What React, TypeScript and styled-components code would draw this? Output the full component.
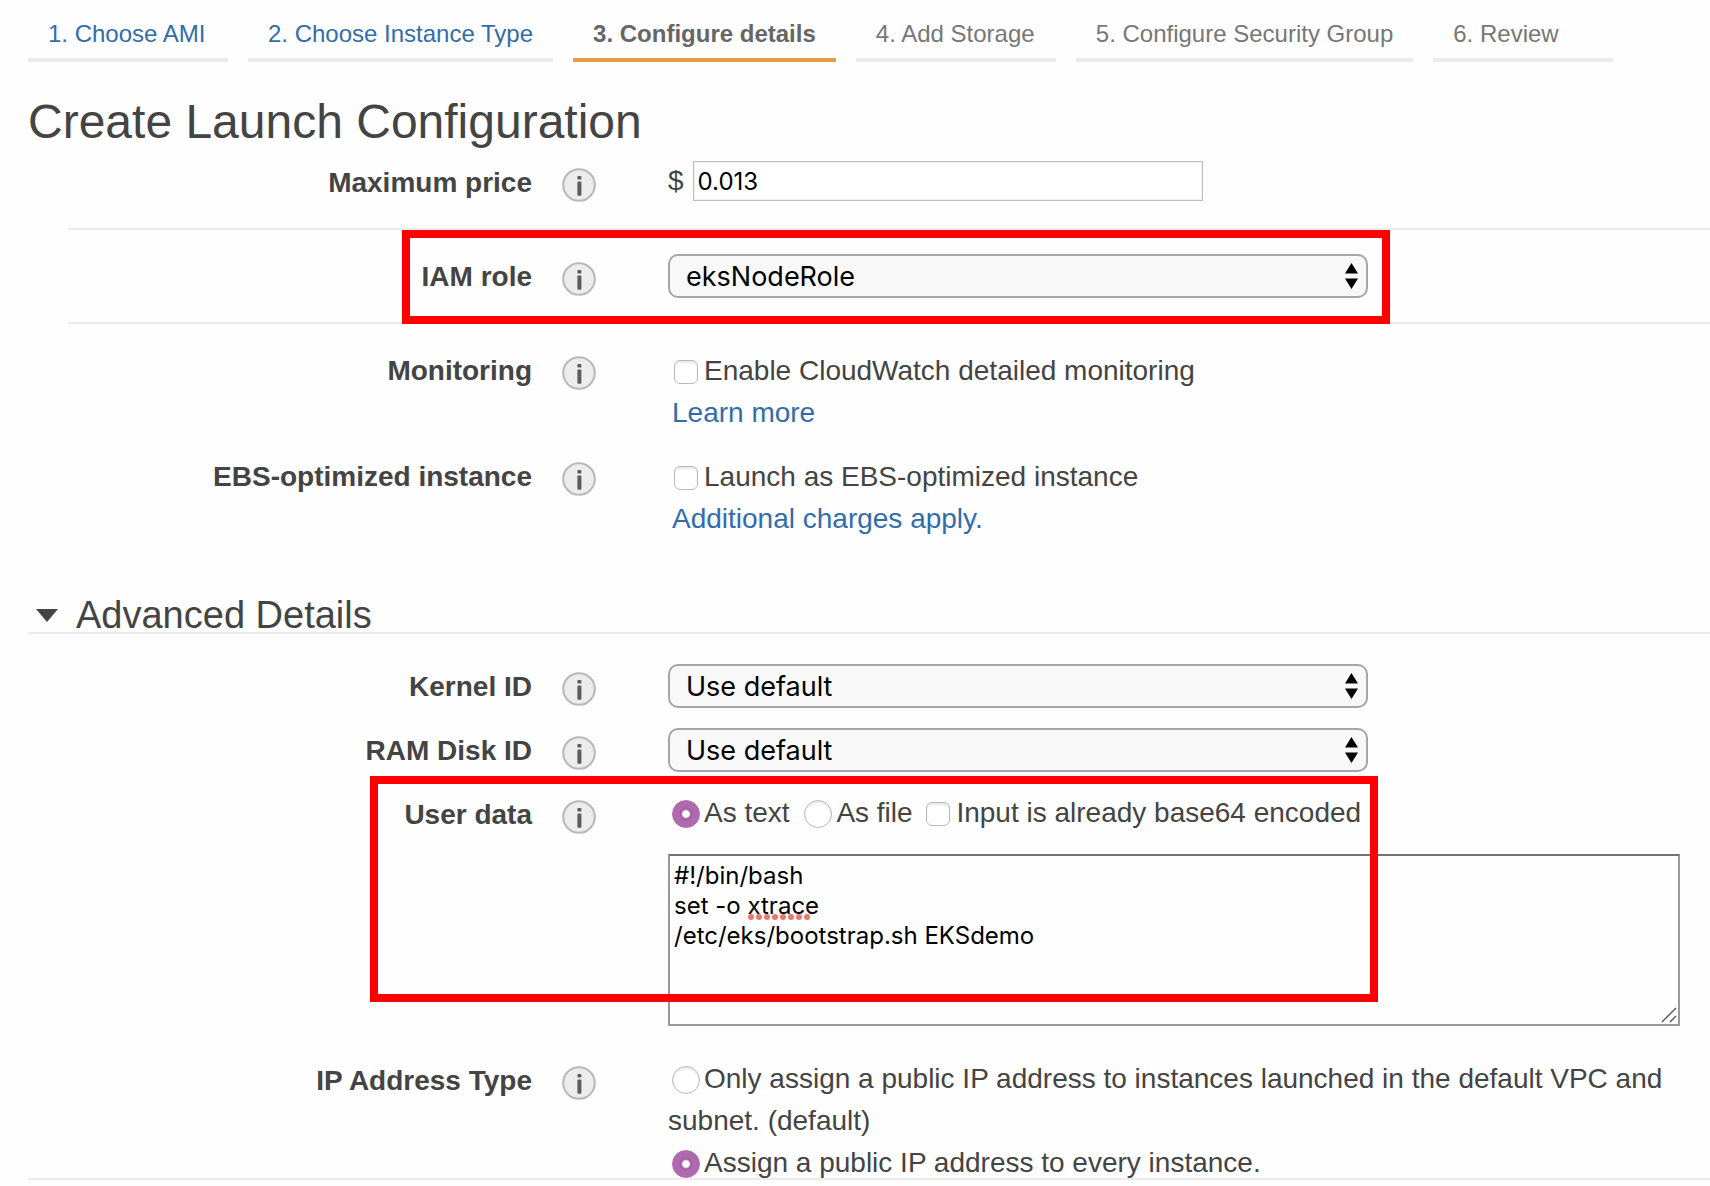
import React, { useState } from "react";
import styled, { createGlobalStyle, css } from "styled-components";

const sans = '"Liberation Sans", Arial, Helvetica, sans-serif';
const system = 'Inter, "Liberation Sans", sans-serif';

const GlobalStyle = createGlobalStyle`
  *, *::before, *::after { box-sizing: border-box; }
  body {
    margin: 0;
    background: #fefefe;
    color: #444;
    font-family: ${sans};
    font-size: 28px;
    line-height: 42px;
  }
`;

const Page = styled.main`
  display: flex;
  flex-direction: column;
  height: 100vh;
`;

const Steps = styled.nav`
  display: flex;
  gap: 20px;
  padding: 20px 0 0 28px;
`;

const Step = styled.a<{ $state: "done" | "current" | "todo" }>`
  min-width: 200px;
  padding: 0 20px 10px;
  border-bottom: 4px solid #ebebeb;
  color: #777;
  font-size: 24px;
  line-height: 28px;
  text-decoration: none;
  white-space: nowrap;
  &:last-child { min-width: 180px; }
  ${(p) => p.$state === "done" && css`color: #326dab;`}
  ${(p) =>
    p.$state === "current" &&
    css`
      color: #666;
      font-weight: bold;
      border-color: #e79c45;
    `}
`;

const Title = styled.h1`
  margin: 32px 0 0 28px;
  font-size: 48px;
  font-weight: normal;
  line-height: 56px;
`;

const Pane = styled.form`
  flex: 1;
  min-height: 0;
  padding-top: 10px;
  overflow-x: hidden;
  overflow-y: auto;
  scrollbar-width: none;
`;

const Footer = styled.footer`
  flex: none;
  height: 8px;
  margin-left: 28px;
  border-top: 2px solid #ebebeb;
`;

const Group = styled.div`
  display: flex;
  flex-direction: column;
  gap: 20px;
  margin-left: 68px;
`;

const MainGroup = styled(Group)`
  padding-top: 24px;
`;

const AdvancedGroup = styled(Group)`
  padding-top: 30px;
`;

const Row = styled.div`
  position: relative;
  display: grid;
  grid-template-columns: 464px 136px minmax(0, 1fr);
  align-items: start;
`;

const DividedRow = styled(Row)`
  margin-left: 68px;
  padding-bottom: 24px;
  border-bottom: 2px solid #ebebeb;
  & + & { padding-top: 24px; }
`;

const labelText = css`
  height: 44px;
  font-weight: bold;
  line-height: 46px;
  text-align: right;
`;

const FieldLabel = styled.label`
  ${labelText}
`;

const FieldName = styled.div`
  ${labelText}
`;

const InfoButton = styled.button`
  width: 34px;
  height: 34px;
  margin: 8px 0 0 30px;
  padding: 0;
  border: 0;
  background: none;
  svg { display: block; }
`;

const Content = styled.div<{ $inset?: boolean }>`
  padding: ${(p) => (p.$inset ? "2px" : "0")} 30px 0 0;
`;

const PriceField = styled.div`
  display: flex;
  align-items: center;
  gap: 9px;
`;

const PriceInput = styled.input`
  width: 510px;
  height: 40px;
  padding: 0 4px;
  border: 1px solid #bbb;
  border-radius: 0;
  background: #fff;
  box-shadow: inset 0 0 0 1px #f2f2f2;
  color: #000;
  font-family: ${system};
  font-size: 24px;
`;

const SelectWrap = styled.div`
  position: relative;
  width: 100%;
  max-width: 700px;
  svg {
    position: absolute;
    top: 9px;
    right: 10px;
    pointer-events: none;
  }
`;

const Select = styled.select`
  display: block;
  width: 100%;
  height: 44px;
  padding: 0 30px 0 16px;
  border: 2px solid #a6a6a6;
  border-radius: 10px;
  appearance: none;
  background: #f8f8f8;
  color: #000;
  font-family: ${system};
  font-size: 27px;
`;

const Line = styled.div``;

const controlShadow = css`
  appearance: none;
  border: 1px solid #b9b9b9;
  background: #fff;
  box-shadow: inset 0 2px 2px #e9e9e9;
`;

const Checkbox = styled.input`
  ${controlShadow}
  width: 24px;
  height: 24px;
  margin: 0 6px;
  border-radius: 6px;
  vertical-align: -4px;
  &:checked { background: #b068ae; }
`;

const Radio = styled.input`
  ${controlShadow}
  width: 28px;
  height: 28px;
  margin: 0 4px;
  border-radius: 50%;
  vertical-align: -6px;
  label + & { margin-left: 7px; }
  &:checked {
    border-color: #b068ae;
    background: radial-gradient(circle, #fff 0 3px, #9c5a9a 5px, #b068ae 7px);
    box-shadow: none;
  }
`;

const Link = styled.a`
  margin-left: 4px;
  color: #326dab;
  text-decoration: none;
`;

const ScriptBox = styled.div`
  position: relative;
  margin: 20px 0 12px;
`;

const Script = styled.textarea`
  display: block;
  width: 100%;
  height: 172px;
  padding: 5px 4px;
  border: 2px solid #999;
  border-top-color: #737373;
  border-radius: 0;
  resize: none;
  background: transparent;
  color: #000;
  font-family: ${system};
  font-size: 24px;
  line-height: 30px;
`;

const SpellingMark = styled.svg`
  position: absolute;
  top: 60px;
  left: 80px;
`;

const Grip = styled.svg`
  position: absolute;
  right: 3px;
  bottom: 3px;
`;

const SectionToggle = styled.button`
  display: flex;
  align-items: center;
  gap: 18px;
  width: calc(100% - 28px);
  height: 36px;
  margin: 58px 0 0 28px;
  padding: 0 0 0 8px;
  border: 0;
  border-bottom: 2px solid #ebebeb;
  background: none;
  color: inherit;
  font-family: inherit;
  font-size: 38px;
  line-height: 34px;
  text-align: left;
`;

const Highlight = styled.div<{ $left: number; $top: number; $width: number; $height: number }>`
  position: absolute;
  left: ${(p) => p.$left}px;
  top: ${(p) => p.$top}px;
  width: ${(p) => p.$width}px;
  height: ${(p) => p.$height}px;
  border: 8px solid #f00;
  pointer-events: none;
`;

function Info({ topic }: { topic: string }) {
  return (
    <InfoButton type="button" aria-label={`About ${topic}`}>
      <svg width="34" height="34" viewBox="0 0 34 34">
        <circle cx="17" cy="17" r="15.8" fill="#ececec" stroke="#b8b8b8" strokeWidth="2" />
        <rect x="15.4" y="8" width="4" height="3.4" rx="1" fill="#5c5c5c" />
        <rect x="15.4" y="13.4" width="4" height="14.4" rx="1" fill="#5c5c5c" />
      </svg>
    </InfoButton>
  );
}

function SelectField({ id, options }: { id: string; options: string[] }) {
  return (
    <SelectWrap>
      <Select id={id}>
        {options.map((o) => (
          <option key={o}>{o}</option>
        ))}
      </Select>
      <svg width="13" height="26" viewBox="0 0 13 26">
        <path d="M6.5 0 13 10.500H0ZM6.5 26 13 15.500H0Z" />
      </svg>
    </SelectWrap>
  );
}

const steps = [
  { text: "1. Choose AMI", state: "done" },
  { text: "2. Choose Instance Type", state: "done" },
  { text: "3. Configure details", state: "current" },
  { text: "4. Add Storage", state: "todo" },
  { text: "5. Configure Security Group", state: "todo" },
  { text: "6. Review", state: "todo" },
] as const;

export default function App() {
  const [open, setOpen] = useState(true);
  return (
    <Page>
      <GlobalStyle />
      <Steps>
        {steps.map((s) => (
          <Step key={s.text} href="#" $state={s.state}>
            {s.text}
          </Step>
        ))}
      </Steps>
      <Title>Create Launch Configuration</Title>
      <Pane>
        <DividedRow>
          <FieldLabel htmlFor="price">Maximum price</FieldLabel>
          <Info topic="Maximum price" />
          <Content>
            <PriceField>
              <span>$</span>
              <PriceInput id="price" type="text" defaultValue="0.013" />
            </PriceField>
          </Content>
        </DividedRow>
        <DividedRow>
          <FieldLabel htmlFor="role">IAM role</FieldLabel>
          <Info topic="IAM role" />
          <Content>
            <SelectField id="role" options={["eksNodeRole"]} />
          </Content>
          <Highlight $left={334} $top={0} $width={988} $height={94} />
        </DividedRow>

        <MainGroup>
          <Row>
            <FieldName>Monitoring</FieldName>
            <Info topic="Monitoring" />
            <Content $inset>
              <Line>
                <Checkbox id="monitoring" type="checkbox" />
                <label htmlFor="monitoring">Enable CloudWatch detailed monitoring</label>
              </Line>
              <Line>
                <Link href="#">Learn more</Link>
              </Line>
            </Content>
          </Row>
          <Row>
            <FieldName>EBS-optimized instance</FieldName>
            <Info topic="EBS-optimized instance" />
            <Content $inset>
              <Line>
                <Checkbox id="ebs" type="checkbox" />
                <label htmlFor="ebs">Launch as EBS-optimized instance</label>
              </Line>
              <Line>
                <Link href="#">Additional charges apply.</Link>
              </Line>
            </Content>
          </Row>
        </MainGroup>

        <SectionToggle type="button" aria-expanded={open} onClick={() => setOpen(!open)}>
          <svg width="22" height="13" viewBox="0 0 22 13">
            <path d="M0 0H22L11 13Z" fill="#444" />
          </svg>
          Advanced Details
        </SectionToggle>

        {open && (
          <AdvancedGroup>
            <Row>
              <FieldLabel htmlFor="kernel">Kernel ID</FieldLabel>
              <Info topic="Kernel ID" />
              <Content>
                <SelectField id="kernel" options={["Use default"]} />
              </Content>
            </Row>
            <Row>
              <FieldLabel htmlFor="ramdisk">RAM Disk ID</FieldLabel>
              <Info topic="RAM Disk ID" />
              <Content>
                <SelectField id="ramdisk" options={["Use default"]} />
              </Content>
            </Row>
            <Row>
              <FieldLabel htmlFor="userdata">User data</FieldLabel>
              <Info topic="User data" />
              <Content>
                <Line>
                  <Radio id="as-text" type="radio" name="source" defaultChecked />
                  <label htmlFor="as-text">As text</label>{" "}
                  <Radio id="as-file" type="radio" name="source" />
                  <label htmlFor="as-file">As file</label>{" "}
                  <Checkbox id="base64" type="checkbox" />
                  <label htmlFor="base64">Input is already base64 encoded</label>
                </Line>
                <ScriptBox>
                  <Script
                    id="userdata"
                    spellCheck={false}
                    defaultValue={"#!/bin/bash\nset -o xtrace\n/etc/eks/bootstrap.sh EKSdemo"}
                  />
                  <SpellingMark width="62" height="6" viewBox="0 0 62 6">
                    {[0, 1, 2, 3, 4, 5, 6, 7].map((i) => (
                      <circle key={i} cx={3 + i * 8} cy="3" r="3" fill="#e9776d" />
                    ))}
                  </SpellingMark>
                  <Grip width="16" height="16" viewBox="0 0 16 16" stroke="#555" strokeWidth="1.4">
                    <path d="M1 15 15 1M9 15 15 9" />
                  </Grip>
                </ScriptBox>
              </Content>
              <Highlight $left={302} $top={-16} $width={1008} $height={226} />
            </Row>
            <Row>
              <FieldName>IP Address Type</FieldName>
              <Info topic="IP Address Type" />
              <Content>
                <Line>
                  <Radio id="ip-default" type="radio" name="ip" />
                  <label htmlFor="ip-default">
                    Only assign a public IP address to instances launched in the default VPC and
                    subnet. (default)
                  </label>
                </Line>
                <Line>
                  <Radio id="ip-every" type="radio" name="ip" defaultChecked />
                  <label htmlFor="ip-every">Assign a public IP address to every instance.</label>
                </Line>
              </Content>
            </Row>
          </AdvancedGroup>
        )}
      </Pane>
      <Footer />
    </Page>
  );
}
